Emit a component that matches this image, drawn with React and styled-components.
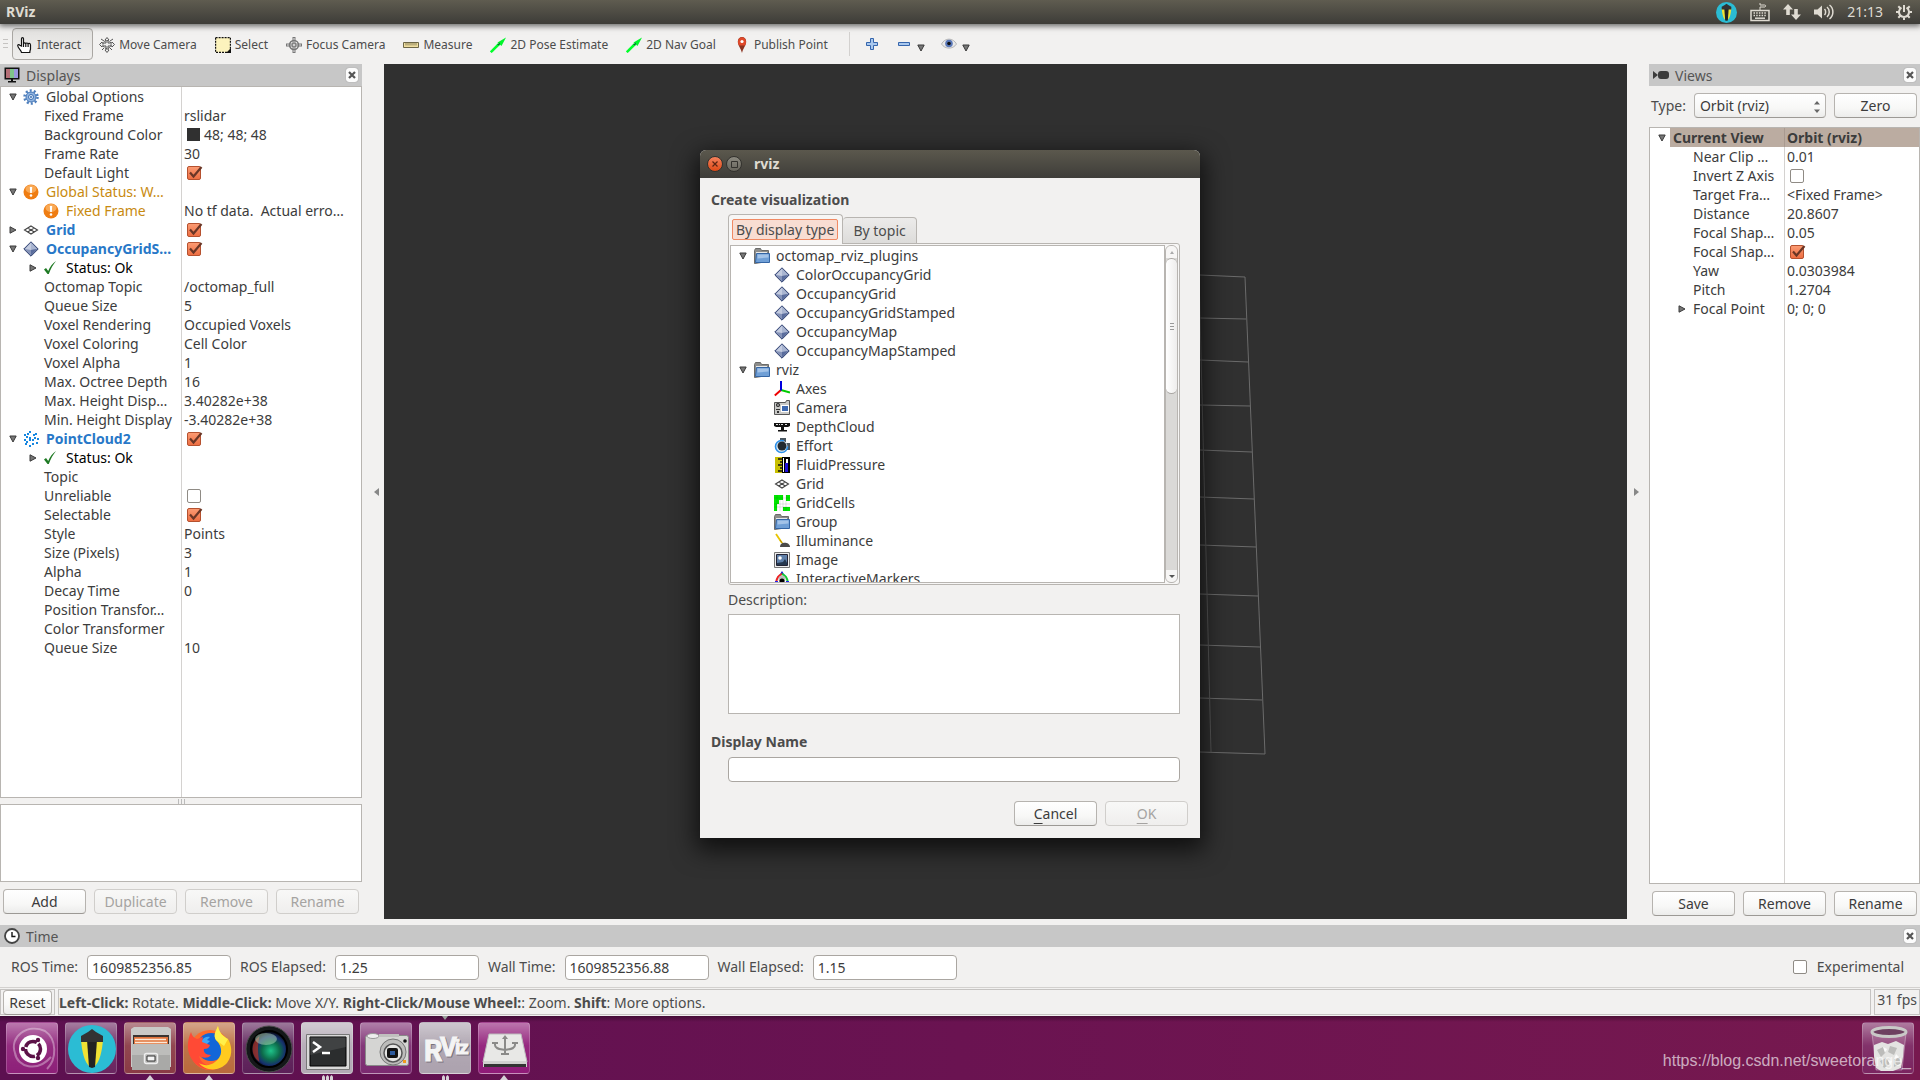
import React from 'react'
import styled, { createGlobalStyle, css } from 'styled-components'

const GlobalStyle = createGlobalStyle`
  * { box-sizing: border-box; }
  body {
    margin: 0;
    background: #f2f1f0;
    color: #3c3c3c;
    font-family: "Noto Sans", "Open Sans", sans-serif;
    font-size: 14px;
    line-height: 20px;
  }
  button, input, select, textarea {
    font: inherit;
    color: inherit;
    margin: 0;
  }
  svg { display: block; flex: none; }
`

/* ---------- data ---------- */

// level = indent, open = arrow direction (undefined for leaf rows), check = tick box value
const displayRows = [
  { name: 'Global Options', level: 0, open: true, icon: 'gear' },
  { name: 'Fixed Frame', level: 1, value: 'rslidar' },
  { name: 'Background Color', level: 1, value: '48; 48; 48', swatch: '#303030' },
  { name: 'Frame Rate', level: 1, value: '30' },
  { name: 'Default Light', level: 1, check: true },
  { name: 'Global Status: W…', level: 0, open: true, icon: 'warn', tone: 'warn' },
  { name: 'Fixed Frame', level: 1, icon: 'warn', tone: 'warn', value: 'No tf data.  Actual erro…' },
  { name: 'Grid', level: 0, open: false, icon: 'grid', tone: 'display', check: true },
  { name: 'OccupancyGridS…', level: 0, open: true, icon: 'diamond', tone: 'display', check: true },
  { name: 'Status: Ok', level: 1, open: false, icon: 'ok', tone: 'ok' },
  { name: 'Octomap Topic', level: 1, value: '/octomap_full' },
  { name: 'Queue Size', level: 1, value: '5' },
  { name: 'Voxel Rendering', level: 1, value: 'Occupied Voxels' },
  { name: 'Voxel Coloring', level: 1, value: 'Cell Color' },
  { name: 'Voxel Alpha', level: 1, value: '1' },
  { name: 'Max. Octree Depth', level: 1, value: '16' },
  { name: 'Max. Height Disp…', level: 1, value: '3.40282e+38' },
  { name: 'Min. Height Display', level: 1, value: '-3.40282e+38' },
  { name: 'PointCloud2', level: 0, open: true, icon: 'points', tone: 'display', check: true },
  { name: 'Status: Ok', level: 1, open: false, icon: 'ok', tone: 'ok' },
  { name: 'Topic', level: 1 },
  { name: 'Unreliable', level: 1, check: false },
  { name: 'Selectable', level: 1, check: true },
  { name: 'Style', level: 1, value: 'Points' },
  { name: 'Size (Pixels)', level: 1, value: '3' },
  { name: 'Alpha', level: 1, value: '1' },
  { name: 'Decay Time', level: 1, value: '0' },
  { name: 'Position Transfor…', level: 1 },
  { name: 'Color Transformer', level: 1 },
  { name: 'Queue Size', level: 1, value: '10' },
]

const viewRows = [
  { name: 'Current View', level: 0, open: true, value: 'Orbit (rviz)', current: true },
  { name: 'Near Clip …', level: 1, value: '0.01' },
  { name: 'Invert Z Axis', level: 1, check: false },
  { name: 'Target Fra…', level: 1, value: '<Fixed Frame>' },
  { name: 'Distance', level: 1, value: '20.8607' },
  { name: 'Focal Shap…', level: 1, value: '0.05' },
  { name: 'Focal Shap…', level: 1, check: true },
  { name: 'Yaw', level: 1, value: '0.0303984' },
  { name: 'Pitch', level: 1, value: '1.2704' },
  { name: 'Focal Point', level: 1, open: false, value: '0; 0; 0' },
]

const pluginGroups = [
  {
    name: 'octomap_rviz_plugins',
    items: [
      ['diamond', 'ColorOccupancyGrid'],
      ['diamond', 'OccupancyGrid'],
      ['diamond', 'OccupancyGridStamped'],
      ['diamond', 'OccupancyMap'],
      ['diamond', 'OccupancyMapStamped'],
    ],
  },
  {
    name: 'rviz',
    items: [
      ['axes', 'Axes'],
      ['camera', 'Camera'],
      ['depth', 'DepthCloud'],
      ['effort', 'Effort'],
      ['fluid', 'FluidPressure'],
      ['grid', 'Grid'],
      ['cells', 'GridCells'],
      ['folder', 'Group'],
      ['lamp', 'Illuminance'],
      ['image', 'Image'],
      ['markers', 'InteractiveMarkers'],
    ],
  },
]

const tools = [
  ['hand', 'Interact'],
  ['move', 'Move Camera'],
  ['select', 'Select'],
  ['focus', 'Focus Camera'],
  ['ruler', 'Measure'],
  ['arrow', '2D Pose Estimate'],
  ['arrow', '2D Nav Goal'],
  ['pin', 'Publish Point'],
]

const timeFields = [
  ['ROS Time:', '1609852356.85'],
  ['ROS Elapsed:', '1.25'],
  ['Wall Time:', '1609852356.88'],
  ['Wall Elapsed:', '1.15'],
]

/* ---------- icons ---------- */

const icons = {
  gear: (
    <>
      <circle cx="8" cy="8" r="6.500" fill="none" stroke="#4d7fbd" strokeWidth="2.500" strokeDasharray="2 2.080" />
      <circle cx="8" cy="8" r="5" fill="#8fb4e0" stroke="#4273b4" />
      <circle cx="8" cy="8" r="2.500" fill="#dce9f8" stroke="#3e70b2" />
      <circle cx="8" cy="8" r="1" fill="#3e70b2" />
    </>
  ),
  warn: (
    <>
      <circle cx="8" cy="8" r="7.500" fill="#ef7d12" />
      <ellipse cx="8" cy="5" rx="5.500" ry="4" fill="#f9a955" />
      <path d="M6.800 3h2.400l-.4 6H7.200z" fill="#fff" />
      <circle cx="8" cy="11.500" r="1.300" fill="#fff" />
    </>
  ),
  grid: (
    <path
      d="M8 4 14.500 8 8 12 1.500 8zM4.700 6l6.600 4M11.300 6l-6.600 4"
      fill="none"
      stroke="#444"
      strokeWidth="1.100"
    />
  ),
  diamond: (
    <>
      <path d="M8 .8 15.200 8 8 15.200.8 8z" fill="#8593b8" stroke="#2e3f6e" />
      <path d="M8 1.600 14 8l-6 1z" fill="#a9b5d1" />
      <path d="M8 1.600 2 8l6 1z" fill="#c3cbdf" />
      <path d="M8 9v5.500L14 8z" fill="#5a6d9d" />
    </>
  ),
  ok: <path d="M1 9.500 3 8l2.200 3C7 6.500 9.500 3.500 13 1c-3 3.800-5.500 8-7.200 13H4.500z" fill="#1f7a24" />,
  points: (
    <g fill="#1787e0">
      {[[6, 0], [1, 3], [10, 3], [3, 5], [12, 2], [6, 6], [1, 8], [3, 10], [11, 6], [9, 8], [6, 8], [14, 7], [13, 11], [6, 14], [9, 12], [2, 12], [4, 2]].map(
        ([x, y]) => <rect key={`${x}-${y}`} x={x} y={y} width="2" height="2" />
      )}
    </g>
  ),
  folder: (
    <>
      <path d="M.5 15.500V2.500l1-2h5l1 2h7v11z" fill="#8d8d8b" stroke="#6b6b69" />
      <path d="M2 4h11v2H2z" fill="#e8e8e6" />
      <path d="M2.500 5.500h13v9h-14z" fill="#6f9fd6" stroke="#3465a4" />
      <path d="M3.500 6.500h11v3l-11 1z" fill="#a3c3e8" />
    </>
  ),
  axes: (
    <g fill="none" strokeWidth="2">
      <path d="M7 9 .8 14.500" stroke="#e00" />
      <path d="M7 9l9 2.500" stroke="#0c0" />
      <path d="M7 0v9.500" stroke="#00d" />
    </g>
  ),
  camera: (
    <>
      <path d="M.5 2.500h11l1-2h3v14H.5z" fill="#c9c9c7" stroke="#555" />
      <rect x="7.500" y="5.500" width="7" height="6" fill="#3c68b0" stroke="#fff" />
      <circle cx="4" cy="5" r="2" fill="#222" />
      <circle cx="4" cy="5" r=".8" fill="#fff" />
      <path d="M2 9h4v1H2zM3 11h2v2H3z" fill="#333" />
    </>
  ),
  depth: (
    <>
      <path d="M0 4h16v3l-2 1H2L0 7zM7 8h3v3H7zM4 11h9v1.500H4z" fill="#111" />
      <path d="M2 5.500h2M5 5.500h1M7 5.500h2M11 5.500h2" stroke="#ddd" />
    </>
  ),
  effort: (
    <>
      <path d="M6 0h6v4H6zM12 5h4v7h-4z" fill="#4a565f" />
      <circle cx="7.500" cy="8.500" r="6" fill="#dfeaf3" stroke="#2a8fe8" strokeWidth="1.600" strokeDasharray="30 8" />
      <circle cx="8" cy="8" r="4.500" fill="#22292e" />
    </>
  ),
  fluid: (
    <>
      <path d="M1 0h9v16H1z" fill="#c8bf00" />
      <path d="M4 2h4M6 5h2M4 8h4M6 11h2M4 14h4" stroke="#111" strokeWidth="1.500" />
      <path d="M8 0h8v16H8z" fill="#000" />
      <path d="M9 1h1v14H9zM12 2h2v4h-2z" fill="#fff" />
      <path d="M11 6h3v9h-3z" fill="#2010d8" />
    </>
  ),
  cells: (
    <>
      <path d="M0 0h16v16H0z" fill="#fff" />
      <path d="M0 0h9v5H5v4H3v7H0zM12 0h4v6h-4zM9 12h7v4H9z" fill="#00e800" />
      <path d="M3 0v16M6 5v11M9 0v16M12 0v16M0 3h16M0 9h16M0 12h16" stroke="#000" strokeOpacity=".15" strokeWidth=".7" />
    </>
  ),
  lamp: (
    <>
      <path d="M2 1l6 9" stroke="#e8c400" strokeWidth="1.800" />
      <path d="M6 7l3 4" stroke="#b08800" />
      <path d="M6 14c0-6 10-5 10 0z" fill="#4a4a4a" />
    </>
  ),
  image: (
    <>
      <path d="M.5.5h15v15H.5z" fill="#eee" stroke="#777" />
      <path d="M2.500 2.500h11v11h-11z" fill="#5f7fa8" stroke="#223" />
      <circle cx="6" cy="6" r="1.800" fill="#fff" />
      <path d="M3 11l6-1 2-3 2 4v2H3z" fill="#26384f" />
    </>
  ),
  markers: (
    <>
      <path d="M8 0l2.500 4h-5z" fill="#11c" />
      <path d="M8 3C3 5 2 9 2 14" fill="none" stroke="#e22" strokeWidth="2" />
      <path d="M8 3c5 2 6 6 6 11" fill="none" stroke="#1c3" strokeWidth="2" />
      <circle cx="8" cy="8" r="3.500" fill="#bbb" />
      <circle cx="8" cy="10" r="2.500" fill="#000" />
      <path d="M1 11h3M12 11h3" stroke="#22e" strokeWidth="2" />
    </>
  ),
  hand: (
    <path
      d="M4.500 9V1.800c0-1.600 2-1.600 2 0V7c0-1.500 2.300-1.500 2.300 0 0-1.400 2.300-1.300 2.300.3 0-1.300 2.400-1.200 2.400.6v4c0 1-.7 1.600-.7 3.600H4.500C4.500 13.500.7 11 .7 8.500c0-1 1.500-1.200 2.100-.2zM6.500 7v3M8.800 7v3M11.100 7v3"
      fill="#fff"
      stroke="#111"
      strokeWidth="1.200"
    />
  ),
  move: (
    <g fill="none" stroke="#555">
      <path d="M8 .5l2 2.500H9v3h4V5l2.500 2.500L13 10V9H9v4h1l-2 2.500L6 13h1V9H3v1L.5 7.500 3 5v1h4V3H6z" fill="#eee" />
      <circle cx="8" cy="7.500" r="4" strokeDasharray="2 1" />
      <path d="M2 2l3 2M14 2l-3 2M3 13l2-2M13 13l-2-2" />
    </g>
  ),
  select: (
    <>
      <rect x=".6" y=".6" width="14.800" height="14.800" fill="#fcf3bd" stroke="#111" strokeWidth="1.200" strokeDasharray="2 1" />
      <path d="M16 11v5h-5z" fill="#111" />
    </>
  ),
  focus: (
    <g fill="none" stroke="#777">
      <path d="M8 0v16M0 8h16" strokeWidth="3" />
      <path d="M8 1v14M1 8h14" stroke="#eee" />
      <circle cx="8" cy="8" r="4.500" strokeWidth="1.500" />
      <circle cx="8" cy="8" r="2" />
    </g>
  ),
  ruler: (
    <>
      <path d="M.5 5.500h15v5H.5z" fill="#f0dfa0" stroke="#6d6647" />
      <path d="M3 6v2.500M5 6v2.500M7 6v2.500M9 6v2.500M11 6v2.500M13 6v2.500" stroke="#6d6647" strokeWidth=".8" />
    </>
  ),
  arrow: (
    <>
      <path d="M.8 15.200 9 7" stroke="#00ff2a" strokeWidth="2.500" />
      <path d="M16 .5 11.500 9 7.500 5.500z" fill="#00f52a" />
      <path d="M10 5.500l-.5 2.800L7 8z" fill="#063" />
    </>
  ),
  pin: (
    <>
      <path d="M8 16C7 11.500 3.800 8.500 3.800 4.500a4.200 4.500 0 0 1 8.400 0C12.200 8.500 9 11.500 8 16z" fill="#8c3320" />
      <path d="M4 5a4 4.800 0 0 1 8 0c0 1.500-.5 2.500-1 3.500H5C4.500 7.500 4 6.500 4 5z" fill="#e0492a" />
      <circle cx="8" cy="4.500" r="1.600" fill="#fff" />
    </>
  ),
  plus: <path d="M6.500 2.500h3v4h4v3h-4v4h-3v-4h-4v-3h4z" fill="#a9c8ee" stroke="#3565ac" />,
  minus: <path d="M2.500 6.500h11v3h-11z" fill="#a9c8ee" stroke="#3565ac" />,
  eye: (
    <>
      <path d="M.5 8C4 1.500 12 1.500 15.500 8 12 13.500 4 13.500.5 8z" fill="#e9e9e9" stroke="#b5b5b5" />
      <circle cx="8" cy="7.500" r="3.800" fill="#5a78b8" />
      <circle cx="8" cy="7.500" r="1.800" fill="#111" />
    </>
  ),
  monitor: (
    <>
      <path d="M.5.5h15v12H.5z" fill="#111" />
      <path d="M2 2h4v9H2z" fill="#b46f76" />
      <path d="M6 2h4v9H6z" fill="#7fc48a" />
      <path d="M10 2h4v9h-4z" fill="#9a97dc" />
      <path d="M7 12h2v2h3v1.500H4V14h3z" fill="#111" />
    </>
  ),
  camcorder: (
    <>
      <path d="M0 4l5 4-5 4z" fill="#3c3c3c" />
      <rect x="5" y="4" width="11" height="8" rx="3" fill="#3c3c3c" />
    </>
  ),
  clock: (
    <>
      <circle cx="8" cy="8" r="7" fill="#fff" stroke="#444" strokeWidth="1.800" />
      <path d="M8 4v4.500h3.500" fill="none" stroke="#111" strokeWidth="1.400" />
    </>
  ),
}

const Icon = ({ name, size = 16 }) => (
  <svg width={size} height={size} viewBox="0 0 16 16" aria-hidden="true">
    {icons[name]}
  </svg>
)

const Triangle = ({ open }) => (
  <svg width="8" height="8" viewBox="0 0 8 8" aria-hidden="true">
    <path d={open ? 'M.8 1h6.400L4 7z' : 'M1 .8 7 4 1 7.200z'} fill="#777" stroke="#3a3a3a" />
  </svg>
)

/* ---------- shared parts ---------- */

const PushButton = styled.button`
  width: ${(p) => p.$width || 83}px;
  height: 25px;
  padding: 0;
  line-height: 22px;
  text-align: center;
  border: 1px solid #b6b3af;
  border-bottom-color: #9c9995;
  border-radius: 4px;
  background: linear-gradient(#fff, #f8f8f7 60%, #ececeb);
  color: #3c3c3c;

  &:disabled {
    color: #a5a3a1;
    border-color: #d0cecb;
    background: linear-gradient(#f8f8f7, #efeeed);
  }
`

const TickWrap = styled.span`
  position: relative;
  display: inline-flex;
  width: 16px;
  height: 14px;

  input {
    appearance: none;
    width: 14px;
    height: 14px;
    border: 1px solid #8f8b85;
    border-radius: 2px;
    background: #fff;
  }
  input:checked {
    border-color: #b5512f;
    background: linear-gradient(#fb9a72, #ee6f43);
  }
  svg {
    position: absolute;
    left: 0;
    top: 0;
    pointer-events: none;
  }
`

const Tick = ({ on, label, id }) => (
  <TickWrap>
    <input id={id} type="checkbox" defaultChecked={on} aria-label={label} />
    {on && (
      <svg width="16" height="14" viewBox="0 0 16 14">
        <path d="M3 6.500 6.500 10.500 14.500 1" fill="none" stroke="#6a3626" strokeWidth="2.200" />
      </svg>
    )}
  </TickWrap>
)

const DockHeader = styled.header`
  display: flex;
  align-items: center;
  height: 22px;
  flex: none;
  gap: 6px;
  padding: 0 4px;
  background: #c7c7c7;
  color: #555;

  h2 {
    flex: 1;
    margin: 0;
    padding-top: 2px;
    font-size: 14px;
    font-weight: 400;
  }
`

const CloseButton = styled.button`
  display: grid;
  place-items: center;
  width: 12px;
  height: 14px;
  padding: 0;
  border: 0;
  border-radius: 3px;
  background: #fcfcfc;
  box-shadow: 0 0 1px #777;
`

const Header = ({ icon, title }) => (
  <DockHeader>
    <Icon name={icon} />
    <h2>{title}</h2>
    <CloseButton aria-label={`Close ${title}`}>
      <svg width="8" height="8" viewBox="0 0 8 8">
        <path d="M1 1l6 6M7 1 1 7" stroke="#555" strokeWidth="2.200" />
      </svg>
    </CloseButton>
  </DockHeader>
)

/* ---------- property tree ---------- */

const TreeBox = styled.div`
  flex: 1;
  min-height: 0;
  overflow: hidden;
  border: 1px solid #b8b5b1;
  background: linear-gradient(#d4d2d0, #d4d2d0) ${(p) => p.$split}px 0 / 1px 100% no-repeat #fff;
`

const TreeTable = styled.table`
  width: 100%;
  table-layout: fixed;
  border-collapse: collapse;

  col:first-child { width: ${(p) => p.$split + 1}px; }
  td {
    height: 19px;
    padding: 0;
    line-height: 19px;
    white-space: pre;
    overflow: hidden;
  }
`

const TreeRow = styled.tr`
  ${(p) => p.$current && css`
    font-weight: 700;
    td { background: #bbaca1; }
    td:first-child { background: linear-gradient(90deg, #fff 20px, #bbaca1 20px calc(100% - 1px), #a99a90 0); }
  `}
`

const tones = {
  warn: css`color: #c88a10;`,
  display: css`color: #2878c8; font-weight: 700;`,
  ok: css`color: #000;`,
}

const NameCell = styled.div`
  display: flex;
  align-items: center;
  height: 19px;
  padding-left: ${(p) => 7 + p.$level * 20}px;
  ${(p) => tones[p.$tone]}

  > svg { margin: 0 7px 0 -1px; }
`

const ArrowSlot = styled.button`
  display: flex;
  align-items: center;
  flex: none;
  width: 16px;
  height: 16px;
  padding: 0 0 0 1px;
  border: 0;
  background: none;
`

const ArrowGap = styled.span`
  flex: none;
  width: 16px;
`

const ValueCell = styled.div`
  display: flex;
  align-items: center;
  height: 19px;
  padding-left: ${(p) => (p.$boxed ? 5 : 2)}px;
`

const Swatch = styled.span`
  width: 13px;
  height: 13px;
  margin-right: 4px;
  background: ${(p) => p.$color};
`

const PropertyTree = ({ rows, split, label }) => (
  <TreeBox $split={split}>
    <TreeTable $split={split} aria-label={label}>
      <colgroup>
        <col />
        <col />
      </colgroup>
      <tbody>
        {rows.map((row, i) => (
          <TreeRow key={i} $current={row.current}>
            <td>
              <NameCell $level={row.level} $tone={row.tone}>
                {row.open === undefined ? (
                  <ArrowGap />
                ) : (
                  <ArrowSlot aria-label={`Toggle ${row.name}`} aria-expanded={row.open}>
                    <Triangle open={row.open} />
                  </ArrowSlot>
                )}
                {row.icon && <Icon name={row.icon} />}
                {row.name}
              </NameCell>
            </td>
            <td>
              <ValueCell $boxed={row.check !== undefined || row.swatch}>
                {row.swatch && <Swatch $color={row.swatch} />}
                {row.check !== undefined && <Tick on={row.check} label={row.name} />}
                {row.value}
              </ValueCell>
            </td>
          </TreeRow>
        ))}
      </tbody>
    </TreeTable>
  </TreeBox>
)

/* ---------- top panel and toolbar ---------- */

const Screen = styled.div`
  position: relative;
  display: flex;
  flex-direction: column;
  height: 100vh;
  overflow: hidden;
`

const TopPanel = styled.header`
  position: relative;
  display: flex;
  align-items: center;
  justify-content: space-between;
  height: 24px;
  flex: none;
  padding: 0 8px 0 6px;
  background: linear-gradient(#5f5c50, #3d3c38);
  box-shadow: 0 1px 6px 1px #0009;
  color: #dfdbd2;

  h1 {
    margin: 0;
    font-size: 14px;
    line-height: 20px;
  }
`

const Indicators = styled.div`
  display: flex;
  align-items: center;
  gap: 13px;
`

const ToolBar = styled.nav`
  display: flex;
  align-items: center;
  height: 40px;
  flex: none;
  padding: 0 3px;
  font-size: 12px;
  color: #4c4c4c;
`

const Grip = styled.span`
  width: 5px;
  height: 10px;
  margin-right: 4px;
  background: repeating-linear-gradient(#c5c3c1 0 1px, transparent 1px 4px);
`

const ToolButton = styled.button`
  display: flex;
  align-items: center;
  gap: 4px;
  height: 32px;
  margin-right: 1px;
  padding: 1px 11px 0 4px;
  border: 1px solid transparent;
  border-radius: 4px;
  background: none;
  white-space: nowrap;

  ${(p) => p.$active && css`
    padding-top: 2px;
    border-color: #aaa7a3;
    background: linear-gradient(#e3e2e0, #efeeed);
  `}
`

const Divider = styled.span`
  width: 1px;
  height: 24px;
  margin: 0 10px 0 8px;
  background: #d3d1cf;
`

const IconButton = styled.button`
  display: flex;
  align-items: flex-end;
  gap: 5px;
  margin-right: 8px;
  padding: 0 4px;
  border: 0;
  background: none;
`

const BeaconIcon = ({ size }) => (
  <svg width={size} height={size} viewBox="0 0 48 48" aria-hidden="true">
    <circle cx="24" cy="24" r="24" fill="#2bbcd4" />
    <path d="M13 15h7l2 27c-6-5-8-16-9-27zM35 15h-7l-2 27c6-5 8-16 9-27z" fill="#f0e234" />
    <path d="M19 15h10l-2 27-3 1-3-1z" fill="#222" />
    <path d="M24 4l4 3 7 4v6H13v-6l7-4z" fill="#333" />
  </svg>
)

const SystemPanel = () => (
  <TopPanel>
    <h1>RViz</h1>
    <Indicators>
      <BeaconIcon size={21} />
      <svg width="20" height="20" viewBox="0 0 20 20" fill="none" stroke="#dfdbd2">
        <path d="M1 8.500h18v10H1z" strokeWidth="1.500" />
        <path d="M10 8V5h5c1-.5 1-2-.5-2H10V1" />
        <path d="M3.500 11h13M3.500 13.500h13" strokeWidth="1.500" strokeDasharray="1.500 1.200" />
        <path d="M5 16.200h10" strokeWidth="1.500" />
      </svg>
      <svg width="18" height="18" viewBox="0 0 18 18" fill="#dfdbd2">
        <path d="M5 1l5 5.500H6.800V12H3.200V6.500H0zM13 17l-5-5.500h3.200V6h3.600v5.500H18z" />
      </svg>
      <svg width="20" height="18" viewBox="0 0 20 18" fill="none" stroke="#dfdbd2" strokeWidth="1.500">
        <path d="M0 6.500h3.500L8 2.500v13l-4.500-4H0z" fill="#dfdbd2" stroke="none" />
        <path d="M10.500 6c1.500 1.500 1.500 4.500 0 6M13 4c3 2.500 3 7.500 0 10M15.500 2c4.500 3.500 4.500 10.500 0 14" />
      </svg>
      <time>21:13</time>
      <svg width="16" height="16" viewBox="0 0 16 16" fill="none" stroke="#dfdbd2" strokeWidth="2">
        <path d="M5.500 3.700a5 5 0 1 0 5 0M8 1v7M8 13v3M0 8h3M13 8h3M2.300 2.300l2 2M13.700 2.300l-2 2M2.300 13.700l2-2M13.700 13.700l-2-2" />
      </svg>
    </Indicators>
  </TopPanel>
)

const Tools = () => (
  <ToolBar aria-label="Tools">
    <Grip />
    {tools.map(([icon, label], i) => (
      <ToolButton key={label} $active={i === 0}>
        <Icon name={icon} />
        {label}
      </ToolButton>
    ))}
    <Divider />
    <IconButton aria-label="Add tool"><Icon name="plus" /></IconButton>
    <IconButton aria-label="Remove tool"><Icon name="minus" /><Triangle open /></IconButton>
    <IconButton aria-label="Visibility"><Icon name="eye" /><Triangle open /></IconButton>
  </ToolBar>
)

/* ---------- workspace ---------- */

const Workspace = styled.main`
  display: flex;
  flex: 1;
  min-height: 0;
`

const SidePanel = styled.section`
  display: flex;
  flex-direction: column;
  flex: none;
  width: ${(p) => p.$width}px;
`

const Handle = styled.button`
  display: flex;
  align-items: center;
  justify-content: ${(p) => (p.$side === 'left' ? 'flex-end' : 'flex-start')};
  width: 22px;
  padding: 0 5px 0 7px;
  border: 0;
  background: none;
`

const RowHandle = styled.div`
  height: 6px;
  flex: none;
  background: repeating-linear-gradient(90deg, #bbb 0 1px, transparent 1px 3px) center / 7px 5px no-repeat;
`

const HelpBox = styled.div`
  height: 78px;
  flex: none;
  border: 1px solid #b8b5b1;
  background: #fff;
`

const ButtonRow = styled.div`
  display: flex;
  gap: 8px;
  padding: ${(p) => p.$pad};
`

const RenderView = styled.div`
  flex: 1;
  min-width: 0;
  background: #303030;
  overflow: hidden;
`

const TypeRow = styled.div`
  display: flex;
  align-items: center;
  gap: 8px;
  padding: 7px 3px 9px 2px;

  label { color: #4c4c4c; }
`

const SelectWrap = styled.span`
  position: relative;
  flex: 1;

  select {
    appearance: none;
    display: block;
    width: 100%;
    height: 25px;
    padding: 0 5px;
    border: 1px solid #b6b3af;
    border-bottom-color: #9c9995;
    border-radius: 4px;
    background: linear-gradient(#fff, #f8f8f7 60%, #ececeb);
  }
  svg {
    position: absolute;
    right: 6px;
    top: 8px;
    pointer-events: none;
  }
`

// right hand edge of the ground grid, the rest is behind the dialog
const gridRows = [[275, 1245, 277], [318, 1246, 319], [360, 1248, 362], [405, 1250, 406], [450, 1252, 452], [497, 1254, 499], [545, 1256, 547], [594, 1258, 596], [645, 1260, 647], [698, 1262, 700], [752, 1265, 754]]

const Scene = () => (
  <RenderView>
    <svg width="1243" height="855" viewBox="384 64 1243 855" fill="none" stroke="#6b6b6b">
      {gridRows.map(([y1, x2, y2]) => (
        <path key={y1} d={`M1100 ${y1 - 4}L1200 ${y1}L${x2} ${y2}`} />
      ))}
      <path d="M1245 277L1265 754" />
      <path d="M1199 275L1211 752" stroke="#595959" />
    </svg>
  </RenderView>
)

/* ---------- time panel and status bar ---------- */

const TimePanel = styled.section`
  flex: none;
  margin-top: 6px;
`

const TimeForm = styled.form`
  display: flex;
  align-items: center;
  gap: 9px;
  height: 40px;
  padding: 0 16px 0 11px;
  color: #4c4c4c;
`

const TextInput = styled.input`
  width: ${(p) => p.$width || '144px'};
  height: 25px;
  padding: 0 4px;
  border: 1px solid #aaa6a1;
  border-radius: 4px;
  background: #fff;
  color: #3c3c3c;
  outline: none;
`

const Experimental = styled.label`
  display: flex;
  align-items: center;
  gap: 8px;
  margin-left: auto;
`

const TimeDock = () => (
  <TimePanel>
    <Header icon="clock" title="Time" />
    <TimeForm>
      {timeFields.map(([label, value], i) => (
        <React.Fragment key={label}>
          <label htmlFor={`time-${i}`}>{label}</label>
          <TextInput id={`time-${i}`} defaultValue={value} />
        </React.Fragment>
      ))}
      <Experimental>
        <Tick on={false} />
        Experimental
      </Experimental>
    </TimeForm>
  </TimePanel>
)

const StatusBar = styled.footer`
  display: flex;
  height: 29px;
  flex: none;
  gap: 3px;
  padding: 1px 0;
  border-top: 1px solid #d3d1cf;
  color: #4c4c4c;
`

const StatusCell = styled.div`
  padding: ${(p) => p.$pad || '0 2px'};
  flex: ${(p) => (p.$grow ? 1 : 'none')};
  border: 1px solid #c5c3c1;
  white-space: nowrap;
`

/* ---------- launcher ---------- */

const Launcher = styled.nav`
  position: relative;
  display: flex;
  gap: 7px;
  height: 64px;
  flex: none;
  padding: 6px;
  background: linear-gradient(#0005, transparent 6px), linear-gradient(90deg, #5c1050, #6a1351 50%, #77194f);
`

const LaunchItem = styled.button`
  position: relative;
  display: grid;
  place-items: center;
  width: 52px;
  height: 52px;
  padding: 0;
  border: 1px solid #ffffff33;
  border-radius: 4px;
  background: linear-gradient(#ffffff66, #ffffff11 45%, transparent), ${(p) => p.$color};
  margin-left: ${(p) => (p.$last ? 'auto' : 0)};
`

const Pips = styled.span`
  position: absolute;
  left: 0;
  right: 0;
  top: 52px;
  display: flex;
  justify-content: center;
  gap: 1px;
`

const FocusMark = styled.span`
  position: absolute;
  top: -7px;
  left: 22px;
  border: 3px solid transparent;
  border-top: 4px solid #9aa09a;
`

const Watermark = styled.span`
  position: absolute;
  right: 9px;
  bottom: 9px;
  font: 16px/20px "Liberation Sans", sans-serif;
  color: #ffffffa6;
`

const launchers = [
  {
    label: 'Ubuntu', color: '#8d1f78', pips: 0,
    art: (
      <>
        <path d="M8 30C2 14 20 0 38 8c12 8 12 28 2 38M44 34C30 50 10 44 8 30" fill="none" stroke="#fff" strokeOpacity=".35" strokeWidth="2" />
        <circle cx="26" cy="26" r="14" fill="#fff" />
        <circle cx="26" cy="26" r="7.500" fill="none" stroke="#5c1248" strokeWidth="3.500" strokeDasharray="13.700 2" strokeDashoffset="6" />
        <circle cx="16" cy="26" r="2.200" fill="#5c1248" />
        <circle cx="31" cy="17" r="2.200" fill="#5c1248" />
        <circle cx="31" cy="35" r="2.200" fill="#5c1248" />
      </>
    ),
  },
  { label: 'Beacon', color: '#6a2560', pips: 0, art: <svg x="2" y="2" width="48" height="48"><BeaconIcon size={48} /></svg> },
  {
    label: 'Files', color: '#8a3a45', pips: 1,
    art: (
      <>
        <path d="M6 6l3-2h34l3 2v38H6z" fill="#c9c9c7" />
        <path d="M8 12h36v10H8z" fill="#3a3431" />
        <path d="M9 14h34v8H9z" fill="#e0733c" />
        <path d="M10 16.500h31M10 19.500h32" stroke="#fbe9d8" strokeWidth="1.500" />
        <path d="M7 21h38v26H7z" fill="#a9a9a7" />
        <path d="M7 21h38v11H7z" fill="#bdbdbb" />
        <rect x="19.500" y="30.500" width="13" height="10" rx="2" fill="#b5b5b3" stroke="#eee" strokeWidth="1.500" />
        <path d="M22 33h8v5h-8z" fill="#f4f4f4" stroke="#333" />
      </>
    ),
  },
  {
    label: 'Firefox', color: '#b96a3c', pips: 1,
    art: (
      <>
        <circle cx="26" cy="27" r="20" fill="#ff6a2b" />
        <circle cx="27" cy="24" r="14" fill="#1266d8" />
        <path d="M26 14c-4-1-6 1-8 3-3 0-5 3-4 6l9-2 3-3-3-1z" fill="#3fa6f5" />
        <path d="M7 9c-4 9-5 20 2 29 7 9 20 11 28 5-10 2-20-1-22-10 3 2 9 3 12-1-5 0-8-3-7-6 3 0 5-1 6-4l-8-3 1-5-6 2c-3-1-5-3-6-7z" fill="#ff4a35" />
        <path d="M34 3c-2 5-5 9-2 14 8 8 6 17-1 22-5 4-11 4-16 1 6 8 20 9 28 0 7-9 4-19 1-24-4-2-9-6-10-13z" fill="#ffcb1f" />
        <path d="M34 3c-2 5-5 9-2 14l8 6 4-7c-4-2-9-6-10-13z" fill="#fff04a" />
      </>
    ),
  },
  {
    label: 'Camera lens', color: '#5c1f58', pips: 0,
    art: (
      <>
        <defs>
          <radialGradient id="lens" cx=".55" cy=".55" r=".5">
            <stop offset="0" stopColor="#1fc48a" />
            <stop offset=".5" stopColor="#0d6b4a" />
            <stop offset=".8" stopColor="#16306e" />
            <stop offset="1" stopColor="#0a0f20" />
          </radialGradient>
        </defs>
        <circle cx="26" cy="26" r="23" fill="#15181a" stroke="#4c4c4c" />
        <circle cx="26" cy="26" r="18" fill="url(#lens)" stroke="#000" strokeWidth="2" />
        <path d="M9.500 26a16.500 16.500 0 0 1 7-13c-2 8-2 18 0 26a16.500 16.500 0 0 1-7-13z" fill="#a03228" opacity=".8" />
        <ellipse cx="23" cy="16" rx="11" ry="6" fill="#b5ddbd" opacity=".5" />
      </>
    ),
  },
  {
    label: 'Terminal', color: '#b3a9b5', pips: 3,
    art: (
      <>
        <path d="M4.500 11.500h43v35h-43z" fill="#d9d9d9" stroke="#777" />
        <path d="M8 14h36v29H8z" fill="#2b2d2e" stroke="#000" />
        <path d="M8 14h36v10L8 32z" fill="#fff" opacity=".1" />
        <path d="M11 19l7 5-7 5M20 30h8" fill="none" stroke="#fff" strokeWidth="2.500" />
      </>
    ),
  },
  {
    label: 'Screenshot', color: '#7b2a70', pips: 0,
    art: (
      <>
        <rect x="4.500" y="12.500" width="43" height="30" rx="2" fill="#d5d5d3" stroke="#888" />
        <ellipse cx="12" cy="13" rx="6" ry="2.500" fill="#eee" stroke="#999" />
        <path d="M18 11h20v3H18z" fill="#c0c0be" />
        <circle cx="32" cy="29" r="13" fill="#bdbdbb" stroke="#777" />
        <circle cx="32" cy="30" r="9" fill="#e5e5e3" stroke="#555" strokeWidth="1.500" />
        <rect x="26" y="25" width="11" height="10" rx="2" fill="#111" />
        <rect x="29" y="28" width="5" height="4" fill="#2c5a9c" />
        <circle cx="44" cy="18" r="1.800" fill="#111" />
        <path d="M42 37h3v3h-3z" fill="#f09a1c" />
      </>
    ),
  },
  {
    label: 'RViz', color: '#aca2ae', pips: 2, focused: true,
    art: (
      <g fontFamily="Roboto, sans-serif" fontWeight="700" fill="#f4f4f4" stroke="#f4f4f4" strokeWidth="1">
        <g fill="#77707a" stroke="#77707a">
          <text x="5" y="39" fontSize="29">R</text>
          <text x="21" y="34" fontSize="26">V</text>
          <text x="36" y="32" fontSize="20">i</text>
          <text x="40" y="32" fontSize="19">z</text>
        </g>
        <text x="4" y="38" fontSize="29">R</text>
        <text x="20" y="33" fontSize="26">V</text>
        <text x="35" y="31" fontSize="20">i</text>
        <text x="39" y="31" fontSize="19">z</text>
      </g>
    ),
  },
  {
    label: 'USB drive', color: '#8f1a77', pips: 1,
    art: (
      <>
        <path d="M10 11h32l6 28H4z" fill="#e8e8e6" stroke="#bbb" />
        <path d="M4 39h44v5H4z" fill="#d0d0ce" />
        <path d="M5 41h42v3H5z" fill="#333" />
        <path d="M26 14v17M22 31h8M16 20v2c0 4 5 4 10 5M36 20v2c0 4-5 4-10 5M13 20h6M33 20h6" fill="none" stroke="#8a8a88" strokeWidth="2" />
        <path d="M26 12l3 4h-6z" fill="#8a8a88" />
      </>
    ),
  },
]

const trashArt = (
  <>
    <path d="M9 10h34l-4 37H13z" fill="#fff" fillOpacity=".15" stroke="#ffffff55" />
    <path d="M11 22l8-3 6 2 8-3 8 4-1 12-2 11-8 3H18l-5-3-2-12z" fill="#e4e4e2" />
    <path d="M14 27l6-3 3 5-5 5zM27 23l7 2-3 7-6-3zM17 38l6-3 4 6-6 4zM31 36l6-2v7l-6 3z" fill="#bcbcba" />
    <path d="M20 24l4 2-2 4zM33 31l3 3-5 2zM25 37l4 1-2 4z" fill="#fafafa" />
    <ellipse cx="26" cy="9" rx="17" ry="4.500" fill="#6d4060" stroke="#c9c9c7" strokeWidth="3" />
  </>
)

const Art = ({ children }) => (
  <svg width="52" height="52" viewBox="0 0 52 52" aria-hidden="true">{children}</svg>
)

const Pip = ({ count }) => (
  <Pips>
    {count === 1 ? (
      <svg width="8" height="5" viewBox="0 0 8 5"><path d="M0 5 4 0l4 5z" fill="#d6d0d6" /></svg>
    ) : (
      Array.from({ length: count }, (_, i) => (
        <svg key={i} width="3" height="5" viewBox="0 0 3 5"><path d="M0 5V1.500L1.500 0 3 1.500V5z" fill="#d6d0d6" /></svg>
      ))
    )}
  </Pips>
)

/* ---------- create visualization dialog ---------- */

const DialogWindow = styled.section`
  position: absolute;
  left: 700px;
  top: 150px;
  width: 500px;
  border-radius: 6px 6px 0 0;
  background: #f2f1f0;
  box-shadow: 0 8px 24px 4px #000000b0;
`

const TitleBar = styled.header`
  display: flex;
  align-items: center;
  gap: 3px;
  height: 28px;
  padding-left: 7px;
  border-radius: 6px 6px 0 0;
  background: linear-gradient(#5b584d, #3e3d39);
  color: #dfdbd2;

  h2 {
    margin: 0 0 0 9px;
    font-size: 14px;
  }
`

const WindowButton = styled.button`
  display: grid;
  place-items: center;
  width: 16px;
  height: 16px;
  padding: 0;
  border: 1px solid #33322e;
  border-radius: 50%;
  background: ${(p) => (p.$close ? 'linear-gradient(#f4815c, #df4a16)' : 'linear-gradient(#8b897f, #67655c)')};
`

const DialogBody = styled.div`
  padding: 12px 12px 12px 11px;

  h3 {
    margin: 0;
    font-size: 14px;
    line-height: 20px;
    color: #4c4c4c;
  }
`

const Fields = styled.div`
  display: flex;
  flex-direction: column;
  margin: ${(p) => p.$top}px 8px ${(p) => p.$bottom}px 17px;

  > label {
    margin: 5px 0 4px;
    color: #4c4c4c;
  }
`

const Tabs = styled.div`
  position: relative;
  display: flex;
  align-items: flex-end;
  margin-bottom: -1px;
`

const Tab = styled.button`
  height: ${(p) => (p.$active ? 30 : 27)}px;
  padding: ${(p) => (p.$active ? '0 4px 0 3px' : '0 6px')};
  border: 1px solid #b8b5b1;
  border-bottom: ${(p) => (p.$active ? '0' : '1px solid #b8b5b1')};
  border-left-width: ${(p) => (p.$active ? 1 : 0)}px;
  border-radius: 4px 4px 0 0;
  background: ${(p) => (p.$active ? '#f7f6f5' : 'linear-gradient(#ecebea, #dddcda)')};
  color: #4c4c4c;

  span {
    display: block;
    padding: 0 3px;
    border: 1px solid ${(p) => (p.$active ? '#f08a64' : 'transparent')};
    border-radius: 2px;
    background: ${(p) => (p.$active ? '#f8ddd2' : 'none')};
    line-height: 19px;
  }
`

const Pane = styled.div`
  display: flex;
  height: 342px;
  padding: 1px;
  border: 1px solid #b8b5b1;
  border-radius: 0 3px 3px 3px;
  background: #f7f6f5;
`

const PluginList = styled.ul`
  flex: 1;
  margin: 0;
  padding: 0;
  overflow: hidden;
  border: 1px solid #b8b5b1;
  background: #fff;
  list-style: none;

  ul { margin: 0; padding: 0; list-style: none; }
`

const PluginRow = styled.div`
  display: flex;
  align-items: center;
  gap: 6px;
  height: 19px;
  padding-left: ${(p) => (p.$group ? 7 : 43)}px;
  line-height: 19px;

  button { margin-right: -6px; }
`

const ScrollTrack = styled.div`
  display: flex;
  flex-direction: column;
  width: 13px;
  border: 1px solid #b8b5b1;
  border-radius: 6px;
  background: #dad9d7;
  overflow: hidden;
`

const ScrollStep = styled.button`
  display: grid;
  place-items: center;
  height: 12px;
  padding: 0;
  border: 0;
  background: #f7f6f5;
`

const ScrollThumb = styled.div`
  height: 136px;
  margin-bottom: auto;
  border: 1px solid #a9a6a2;
  border-width: 1px 0;
  border-radius: 6px;
  background:
    repeating-linear-gradient(#999 0 1px, transparent 1px 3px) center / 4px 7px no-repeat,
    linear-gradient(90deg, #fff, #eeedec);
`

const Description = styled.textarea`
  display: block;
  height: 100px;
  border: 1px solid #b8b5b1;
  background: #fff;
  resize: none;
  outline: none;
`

const DialogButtons = styled.div`
  display: flex;
  justify-content: flex-end;
  gap: 8px;

  u { text-underline-offset: 4px; }
`

const CreateDialog = () => (
  <DialogWindow role="dialog" aria-label="rviz">
    <TitleBar>
      <WindowButton $close aria-label="Close">
        <svg width="6" height="6" viewBox="0 0 6 6"><path d="M.5.5l5 5M5.500.5l-5 5" stroke="#5a2412" strokeWidth="1.200" /></svg>
      </WindowButton>
      <WindowButton aria-label="Maximize">
        <svg width="7" height="7" viewBox="0 0 7 7"><path d="M.5.5h6v6h-6z" fill="none" stroke="#33322e" /></svg>
      </WindowButton>
      <h2>rviz</h2>
    </TitleBar>
    <DialogBody>
      <h3>Create visualization</h3>
      <Fields $top={4} $bottom={18}>
        <Tabs role="tablist">
          <Tab role="tab" aria-selected="true" $active><span>By display type</span></Tab>
          <Tab role="tab" aria-selected="false"><span>By topic</span></Tab>
        </Tabs>
        <Pane>
          <PluginList>
            {pluginGroups.map((group) => (
              <li key={group.name}>
                <PluginRow $group>
                  <ArrowSlot aria-label={`Toggle ${group.name}`}><Triangle open /></ArrowSlot>
                  <Icon name="folder" />
                  {group.name}
                </PluginRow>
                <ul>
                  {group.items.map(([icon, name]) => (
                    <li key={name}><PluginRow><Icon name={icon} />{name}</PluginRow></li>
                  ))}
                </ul>
              </li>
            ))}
          </PluginList>
          <ScrollTrack>
            <ScrollStep aria-label="Scroll up">
              <svg width="4" height="3" viewBox="0 0 4 3"><path d="M0 3 2 0l2 3z" fill="#aaa" /></svg>
            </ScrollStep>
            <ScrollThumb />
            <ScrollStep aria-label="Scroll down">
              <svg width="6" height="3" viewBox="0 0 6 3"><path d="M0 0h6L3 3z" fill="#555" /></svg>
            </ScrollStep>
          </ScrollTrack>
        </Pane>
        <label htmlFor="description">Description:</label>
        <Description id="description" readOnly />
      </Fields>
      <h3><label htmlFor="display-name">Display Name</label></h3>
      <Fields $top={5} $bottom={19}>
        <TextInput id="display-name" $width="100%" />
      </Fields>
      <DialogButtons>
        <PushButton><u>C</u>ancel</PushButton>
        <PushButton disabled><u>O</u>K</PushButton>
      </DialogButtons>
    </DialogBody>
  </DialogWindow>
)

export default function App() {
  return (
    <Screen>
      <GlobalStyle />
      <SystemPanel />
      <Tools />
      <Workspace>
        <SidePanel $width={362}>
          <Header icon="monitor" title="Displays" />
          <PropertyTree rows={displayRows} split={180} label="Displays" />
          <RowHandle />
          <HelpBox />
          <ButtonRow $pad="7px 3px 5px">
            <PushButton>Add</PushButton>
            <PushButton disabled>Duplicate</PushButton>
            <PushButton disabled>Remove</PushButton>
            <PushButton disabled>Rename</PushButton>
          </ButtonRow>
        </SidePanel>
        <Handle $side="left" aria-label="Hide left panel">
          <svg width="5" height="8" viewBox="0 0 5 8"><path d="M5 0v8L0 4z" fill="#888" /></svg>
        </Handle>
        <Scene />
        <Handle $side="right" aria-label="Hide right panel">
          <svg width="5" height="8" viewBox="0 0 5 8"><path d="M0 0v8l5-4z" fill="#888" /></svg>
        </Handle>
        <SidePanel $width={271}>
          <Header icon="camcorder" title="Views" />
          <TypeRow>
            <label htmlFor="view-type">Type:</label>
            <SelectWrap>
              <select id="view-type"><option>Orbit (rviz)</option></select>
              <svg width="6" height="12" viewBox="0 0 6 12"><path d="M0 3.500 3 0l3 3.500zM0 8.500h6L3 12z" fill="#666" /></svg>
            </SelectWrap>
            <PushButton>Zero</PushButton>
          </TypeRow>
          <PropertyTree rows={viewRows} split={134} label="Views" />
          <ButtonRow $pad="7px 3px 3px">
            <PushButton>Save</PushButton>
            <PushButton>Remove</PushButton>
            <PushButton>Rename</PushButton>
          </ButtonRow>
        </SidePanel>
      </Workspace>
      <TimeDock />
      <StatusBar>
        <StatusCell><PushButton $width={49}>Reset</PushButton></StatusCell>
        <StatusCell $grow $pad="3px 0">
          <b>Left-Click:</b> Rotate. <b>Middle-Click:</b> Move X/Y. <b>Right-Click/Mouse Wheel:</b>: Zoom. <b>Shift</b>: More options.
        </StatusCell>
        <StatusCell>31 fps</StatusCell>
      </StatusBar>
      <Launcher aria-label="Launcher">
        {launchers.map((app) => (
          <LaunchItem key={app.label} $color={app.color} aria-label={app.label}>
            {app.focused && <FocusMark />}
            <Art>{app.art}</Art>
            <Pip count={app.pips} />
          </LaunchItem>
        ))}
        <LaunchItem $last $color="#7a2460" aria-label="Trash"><Art>{trashArt}</Art></LaunchItem>
        <Watermark>https://blog.csdn.net/sweetorange_</Watermark>
      </Launcher>
      <CreateDialog />
    </Screen>
  )
}
